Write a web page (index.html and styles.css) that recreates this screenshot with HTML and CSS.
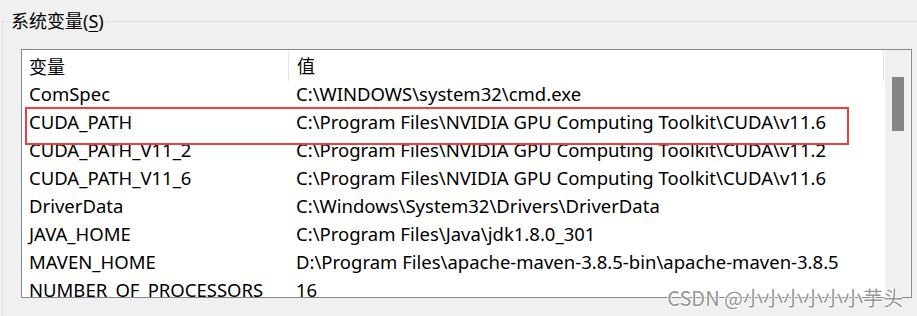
FILE: index.html
```html
<!DOCTYPE html>
<html lang="zh-CN">
<head>
<meta charset="utf-8">
<link rel="stylesheet" href="styles.css">
</head>
<body>
<div class="group">
  <div class="legend">系统变量(<u>S</u>)</div>
  <div class="list">
    <div class="content">
      <div class="row head">
        <div class="c1">变量</div>
        <div class="c2">值</div>
      </div>
      <div class="row"><div class="c1">ComSpec</div><div class="c2">C:\WINDOWS\system32\cmd.exe</div></div>
      <div class="row"><div class="c1">CUDA_PATH</div><div class="c2">C:\Program Files\NVIDIA GPU Computing Toolkit\CUDA\v11.6</div></div>
      <div class="row"><div class="c1">CUDA_PATH_V11_2</div><div class="c2">C:\Program Files\NVIDIA GPU Computing Toolkit\CUDA\v11.2</div></div>
      <div class="row"><div class="c1">CUDA_PATH_V11_6</div><div class="c2">C:\Program Files\NVIDIA GPU Computing Toolkit\CUDA\v11.6</div></div>
      <div class="row"><div class="c1">DriverData</div><div class="c2">C:\Windows\System32\Drivers\DriverData</div></div>
      <div class="row"><div class="c1">JAVA_HOME</div><div class="c2">C:\Program Files\Java\jdk1.8.0_301</div></div>
      <div class="row"><div class="c1">MAVEN_HOME</div><div class="c2">D:\Program Files\apache-maven-3.8.5-bin\apache-maven-3.8.5</div></div>
      <div class="row"><div class="c1">NUMBER_OF_PROCESSORS</div><div class="c2">16</div></div>
      <div class="highlight"></div>
    </div>
    <div class="scrollbar"><div class="thumb"></div></div>
  </div>
</div>
<div class="watermark">CSDN @小小小小小小芋头</div>
</body>
</html>
```
FILE: styles.css
```css
html, body {
  margin: 0;
  padding: 0;
  background: #f0f0f0;
  width: 917px;
  height: 316px;
  overflow: hidden;
  font-family: "Noto Sans", "Noto Sans CJK SC", sans-serif;
  font-size: 18.5px;
  color: #000;
}
.group {
  margin: 21px 0 0 2px;
  height: 294px;
  box-sizing: border-box;
  border-top: 1px solid #dcdcdc;
  border-left: 1px solid #dcdcdc;
}
.legend {
  display: inline-block;
  margin: -13px 0 0 7px;
  padding: 0 1px;
  background: #f0f0f0;
  font-size: 18px;
  line-height: 24px;
  height: 24px;
  vertical-align: top;
}
.legend u {
  text-underline-offset: 3px;
}
.list {
  margin: 2px 0 0 18px;
  width: 889px;
  height: 247px;
  border: 1px solid #828790;
  background: #fff;
  display: flex;
  overflow: hidden;
}
.content {
  position: relative;
  width: 863px;
  flex: none;
}
.row {
  display: flex;
  height: 28px;
  line-height: 25px;
  white-space: nowrap;
}
.row.head {
  height: 31px;
  line-height: 33px;
  border-right: 1px solid #e5e5e5;
  width: 861px;
  font-size: 18px;
}
.c1 {
  width: 259px;
  padding-left: 7px;
  flex: none;
}
.head .c1 {
  border-right: 1px solid #e5e5e5;
  height: 30px;
  margin-top: 1px;
  line-height: 32px;
}
.c2 {
  padding-left: 8px;
}
.highlight {
  position: absolute;
  left: 3px;
  top: 57px;
  box-sizing: border-box;
  width: 824px;
  height: 38px;
  border: 2px solid #ec4040;
}
.scrollbar {
  flex: none;
  width: 25px;
  background: #f0f0f0;
  border-right: 1px solid #fff;
}
.thumb {
  margin: 27px 0 0 7px;
  width: 12px;
  height: 54px;
  background: #858585;
}
.watermark {
  position: absolute;
  right: 14px;
  top: 283px;
  font-family: "Noto Sans CJK SC", sans-serif;
  font-size: 20px;
  line-height: 29px;
  color: rgba(120, 120, 120, 0.8);
  text-shadow: 1px 0 #fff, -1px 0 #fff, 0 1px #fff, 0 -1px #fff;
}
```
